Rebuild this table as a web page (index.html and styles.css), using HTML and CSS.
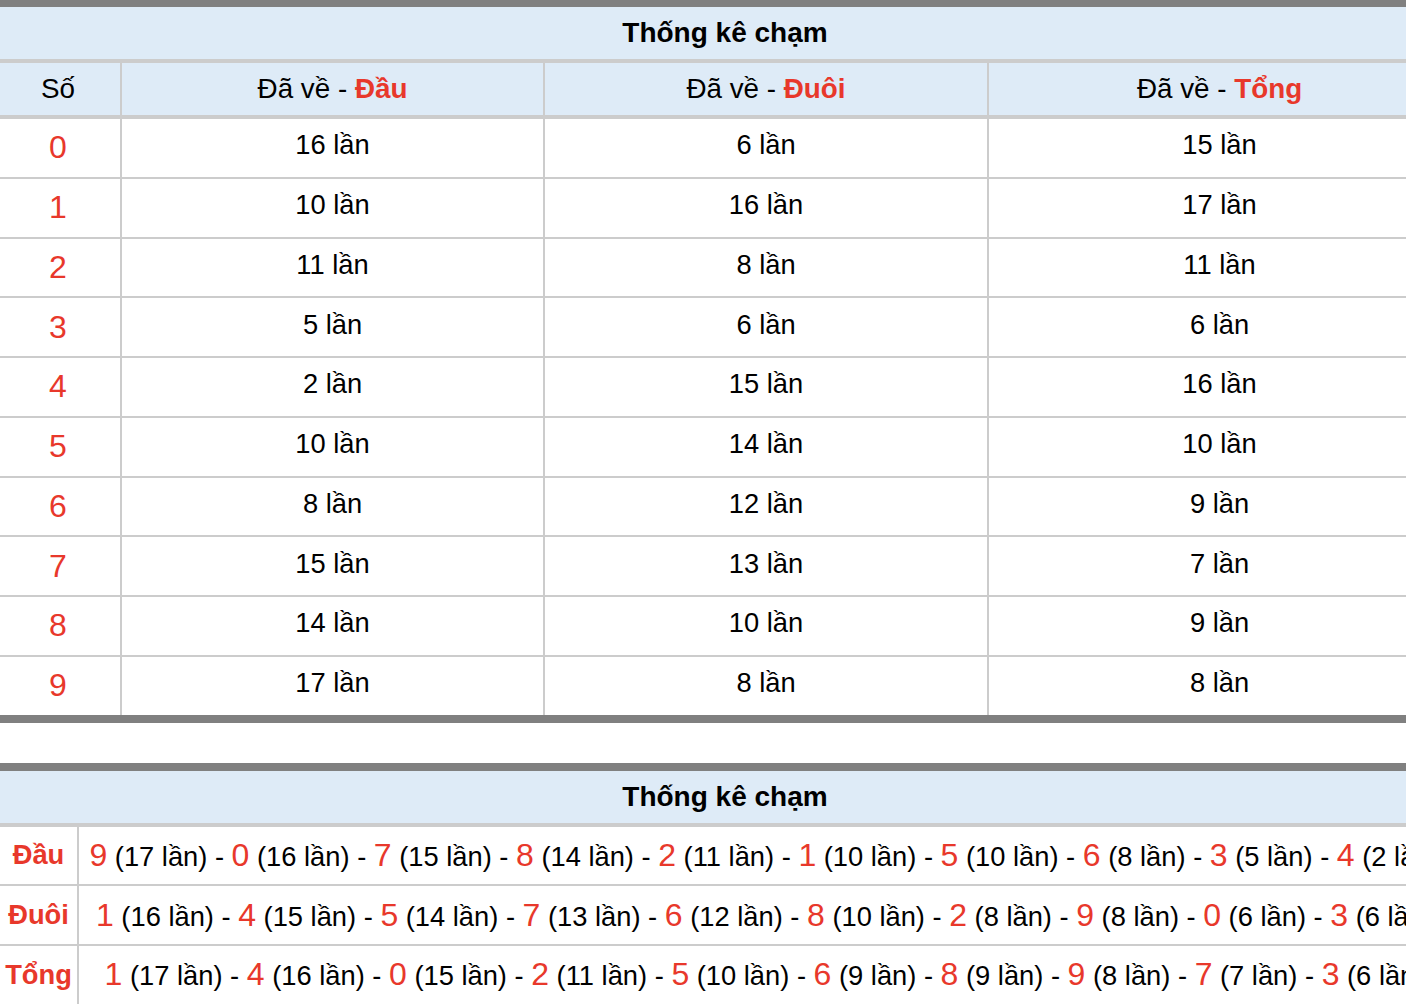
FILE: index.html
```html
<!DOCTYPE html>
<html lang="vi">
<head>
<meta charset="utf-8">
<title>Thống kê chạm</title>
<link rel="stylesheet" href="styles.css">
</head>
<body>
<section class="cham cham--first">
  <div class="cham-title">Thống kê chạm</div>
  <div class="cell head first">Số</div>
  <div class="cell head sep"><span>Đã về - <b class="red">Đầu</b></span></div>
  <div class="cell head sep"><span>Đã về - <b class="red">Đuôi</b></span></div>
  <div class="cell head sep"><span>Đã về - <b class="red">Tổng</b></span></div>

  <div class="cell num">0</div><div class="cell val sep">16 lần</div><div class="cell val sep">6 lần</div><div class="cell val sep">15 lần</div>
  <div class="cell num">1</div><div class="cell val sep">10 lần</div><div class="cell val sep">16 lần</div><div class="cell val sep">17 lần</div>
  <div class="cell num">2</div><div class="cell val sep">11 lần</div><div class="cell val sep">8 lần</div><div class="cell val sep">11 lần</div>
  <div class="cell num">3</div><div class="cell val sep">5 lần</div><div class="cell val sep">6 lần</div><div class="cell val sep">6 lần</div>
  <div class="cell num">4</div><div class="cell val sep">2 lần</div><div class="cell val sep">15 lần</div><div class="cell val sep">16 lần</div>
  <div class="cell num">5</div><div class="cell val sep">10 lần</div><div class="cell val sep">14 lần</div><div class="cell val sep">10 lần</div>
  <div class="cell num">6</div><div class="cell val sep">8 lần</div><div class="cell val sep">12 lần</div><div class="cell val sep">9 lần</div>
  <div class="cell num">7</div><div class="cell val sep">15 lần</div><div class="cell val sep">13 lần</div><div class="cell val sep">7 lần</div>
  <div class="cell num">8</div><div class="cell val sep">14 lần</div><div class="cell val sep">10 lần</div><div class="cell val sep">9 lần</div>
  <div class="cell num last">9</div><div class="cell val sep last">17 lần</div><div class="cell val sep last">8 lần</div><div class="cell val sep last">8 lần</div>
</section>

<section class="cham cham--second">
  <div class="cham-title">Thống kê chạm</div>

  <div class="cell label">Đầu</div>
  <div class="cell list sep"><span class="line"><span class="red big">9</span> (17 lần) - <span class="red big">0</span> (16 lần) - <span class="red big">7</span> (15 lần) - <span class="red big">8</span> (14 lần) - <span class="red big">2</span> (11 lần) - <span class="red big">1</span> (10 lần) - <span class="red big">5</span> (10 lần) - <span class="red big">6</span> (8 lần) - <span class="red big">3</span> (5 lần) - <span class="red big">4</span> (2 lần)</span></div>

  <div class="cell label">Đuôi</div>
  <div class="cell list sep"><span class="line"><span class="red big">1</span> (16 lần) - <span class="red big">4</span> (15 lần) - <span class="red big">5</span> (14 lần) - <span class="red big">7</span> (13 lần) - <span class="red big">6</span> (12 lần) - <span class="red big">8</span> (10 lần) - <span class="red big">2</span> (8 lần) - <span class="red big">9</span> (8 lần) - <span class="red big">0</span> (6 lần) - <span class="red big">3</span> (6 lần)</span></div>

  <div class="cell label last">Tổng</div>
  <div class="cell list sep last"><span class="line"><span class="red big">1</span> (17 lần) - <span class="red big">4</span> (16 lần) - <span class="red big">0</span> (15 lần) - <span class="red big">2</span> (11 lần) - <span class="red big">5</span> (10 lần) - <span class="red big">6</span> (9 lần) - <span class="red big">8</span> (9 lần) - <span class="red big">9</span> (8 lần) - <span class="red big">7</span> (7 lần) - <span class="red big">3</span> (6 lần)</span></div>
</section>
</body>
</html>
```

FILE: styles.css
```css
* {
  box-sizing: border-box;
}

html,
body {
  margin: 0;
  padding: 0;
  overflow: hidden;
  background: #ffffff;
}

body {
  font-family: "Liberation Sans", Arial, Helvetica, sans-serif;
  font-size: 27.3px;
  color: #000000;
}

.red {
  color: #e8382b;
}

.cham {
  display: grid;
  width: 1450px;
  border-top: 8px solid #808080;
  border-bottom: 8px solid #808080;
}

.cham--first {
  grid-template-columns: 120px 423px 444px 463px;
  border-top-width: 7px;
}

.cham--second {
  grid-template-columns: 77px 1373px;
  margin-top: 40px;
}

.cham-title {
  grid-column: 1 / -1;
  height: 56px;
  display: flex;
  align-items: center;
  justify-content: center;
  background: #deebf7;
  border-bottom: 4px solid #cccccc;
  font-weight: bold;
  font-size: 28px;
}

.cell {
  display: flex;
  align-items: center;
  justify-content: center;
  height: 59.75px;
  border-bottom: 2px solid #cccccc;
  white-space: nowrap;
}

.cell.last {
  height: 57.75px;
  border-bottom: none;
}

.sep {
  border-left: 2px solid #cccccc;
}

.head {
  height: 56px;
  background: #deebf7;
  border-bottom: 4px solid #cccccc;
  font-size: 27.8px;
}

.head b {
  font-weight: bold;
}

.first,
.num {
  padding-right: 4px;
}

.num {
  color: #e8382b;
  font-size: 32px;
}

.val {
  padding-bottom: 5px;
}

.label {
  color: #e8382b;
  font-weight: bold;
}

.line {
  white-space: nowrap;
}

.big {
  font-size: 32px;
}
```
